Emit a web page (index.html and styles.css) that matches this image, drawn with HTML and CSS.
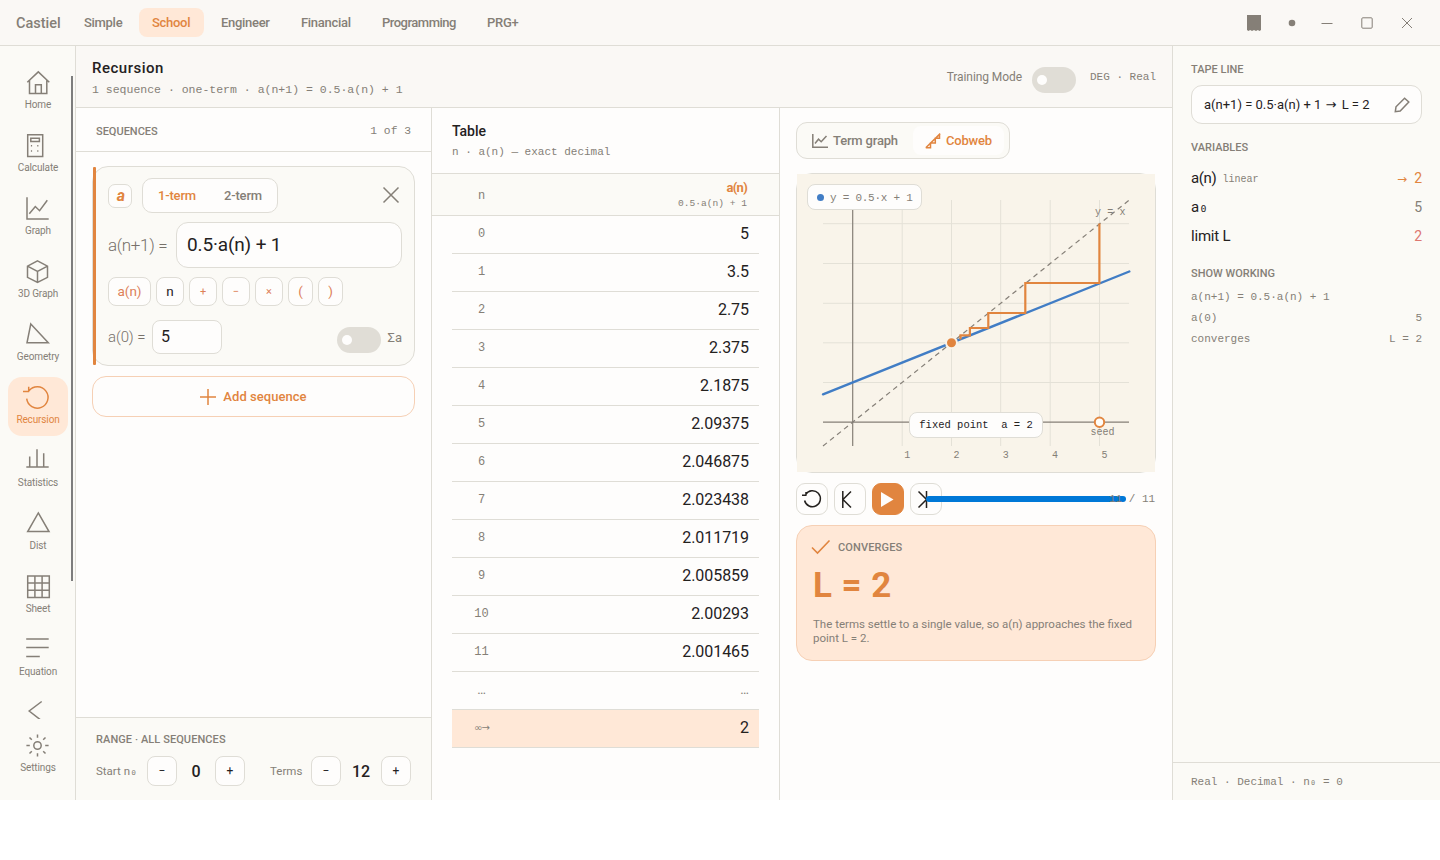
FILE: index.html
```html
<!DOCTYPE html>
<html lang="en">
<head>
<meta charset="utf-8">
<title>Castiel</title>
<link rel="stylesheet" href="styles.css">
</head>
<body>
<div class="app">
  <header class="titlebar">
    <div class="brand">Castiel</div>
    <nav class="modes">
      <span class="mode mode-simple">Simple</span>
      <span class="mode mode-school active">School</span>
      <span class="mode mode-engineer">Engineer</span>
      <span class="mode mode-financial">Financial</span>
      <span class="mode mode-programming">Programming</span>
      <span class="mode mode-prg">PRG+</span>
    </nav>
    <div class="window-tools">
      <svg width="14" height="16" viewBox="0 0 14 16"><path class="solid" d="M0 0H14V15l-1.400 1-1.800-1-1.800 1-2-1-2 1-1.800-1L1.400 16 0 15Z"/></svg>
      <svg width="8" height="8" viewBox="0 0 8 8"><circle class="solid" cx="4" cy="4" r="3.300"/></svg>
      <svg width="12" height="12" viewBox="0 0 12 12"><path class="hair" d="M.5 6.500h11"/></svg>
      <svg width="12" height="12" viewBox="0 0 12 12"><rect class="hair" x=".8" y=".8" width="10.400" height="10.400" rx="1"/></svg>
      <svg width="12" height="12" viewBox="0 0 12 12"><path class="hair" d="M1 1l10 10M11 1L1 11"/></svg>
    </div>
  </header>

  <div class="body">
    <aside class="sidebar">
      <div class="nav-list">
        <div class="nav-item"><svg class="ico" viewBox="0 0 24 24"><path d="M1.300 11.300L12.300.9l11 10.400M3.500 9.500V22.500H20.800V9.500M9.500 22V13.800H15.300V22"/></svg><span>Home</span></div>
        <div class="nav-item"><svg class="ico" viewBox="0 0 24 24"><path d="M1.700.8H16.700V22.500H1.700ZM4.800 4.300H13.400V7.500H4.800Z"/><path d="M4.900 11.700h1.200M11.200 11.700h1.200M4.900 17h1.200M11.200 17h1.200"/></svg><span>Calculate</span></div>
        <div class="nav-item"><svg class="ico" viewBox="0 0 24 24"><path d="M1 .3V22H22.700M3.300 16.700l6-7.200 4.300 4.200L21.300 3.300"/></svg><span>Graph</span></div>
        <div class="nav-item"><svg class="ico" viewBox="0 0 24 24"><path d="M11.500.8l10 5.400v11.100l-10 5-10-5V6.200ZM1.500 6.200l10 5.100 10-5.100M11.500 11.300v11"/></svg><span>3D Graph</span></div>
        <div class="nav-item"><svg class="ico" viewBox="0 0 24 24"><path d="M4.800.9L22.300 19.800H1Z"/></svg><span>Geometry</span></div>
        <div class="nav-item active"><svg class="ico" viewBox="0 0 24 24"><path d="M3 4.700A10.700 10.700 0 1 1 .7 12.700M-3 5.500H3.200M2.700.8V5.500"/></svg><span>Recursion</span></div>
        <div class="nav-item"><svg class="ico" viewBox="0 0 24 24"><path d="M.3 18H22.700M3.700 18V7.500M11 18V.3M17.700 18V4.200"/></svg><span>Statistics</span></div>
        <div class="nav-item"><svg class="ico" viewBox="0 0 24 24"><path d="M12.300.9L23 19.600H1.700Z"/></svg><span>Dist</span></div>
        <div class="nav-item"><svg class="ico" viewBox="0 0 24 24"><path d="M1.700.9H23.300V22.500H1.700ZM8.900.9V22.500M16.100.9V22.500M1.700 8.100H23.300M1.700 15.300H23.300"/></svg><span>Sheet</span></div>
        <div class="nav-item"><svg class="ico" viewBox="0 0 24 24"><path d="M.2 1H22.700M.2 9.600H22.700M.2 18.400H13.800"/></svg><span>Equation</span></div>
        <div class="nav-item"><svg class="ico" viewBox="0 0 24 24"><path d="M15.700.5L3.200 10 16 20"/></svg></div>
      </div>
      <div class="scroll-thumb"></div>
      <div class="nav-item settings"><svg class="ico" viewBox="0 0 24 24"><circle cx="11.500" cy="11.500" r="3.700"/><path d="M11.500.5v3.300M11.500 19.200v3.300M.4 11.500h3.400M19.200 11.500h3.400M3.500 3.500l2.300 2.300M17.200 17.200l2.300 2.300M19.500 3.500l-2.300 2.300M5.800 17.200l-2.300 2.300"/></svg><span>Settings</span></div>
    </aside>

    <main class="main">
      <div class="page-head">
        <div>
          <div class="page-title">Recursion</div>
          <div class="page-sub mono">1 sequence · one-term · a(n+1) = 0.5·a(n) + 1</div>
        </div>
        <div class="head-right">
          <span class="training">Training Mode</span>
          <span class="toggle"></span>
          <span class="angle mono">DEG · Real</span>
        </div>
      </div>

      <div class="columns">
        <section class="col-seq">
          <div class="seq-head"><span class="caps">SEQUENCES</span><span class="mono">1 of 3</span></div>
          <div class="seq-list">
            <div class="seq-card">
              <div class="card-top">
                <span class="seq-name">a</span>
                <div class="segment"><span class="active">1-term</span><span>2-term</span></div>
                <svg class="close" width="18" height="18" viewBox="0 0 18 18"><path d="M1.500 1.500l15 15M16.500 1.500l-15 15"/></svg>
              </div>
              <div class="formula"><span class="formula-label">a(n+1) =</span><div class="formula-input">0.5·a(n) + 1</div></div>
              <div class="chips">
                <span class="chip wide">a(n)</span><span class="chip dark">n</span><span class="chip sm">+</span><span class="chip sm">−</span><span class="chip sm">×</span><span class="chip paren">(</span><span class="chip paren">)</span>
              </div>
              <div class="initial">
                <span class="initial-label">a(0) =</span><div class="initial-input">5</div>
                <span class="toggle"></span><span class="sigma">Σa</span>
              </div>
            </div>
            <div class="add"><svg width="16" height="16" viewBox="0 0 16 16"><path d="M8 0v16M0 8h16"/></svg><span>Add sequence</span></div>
          </div>
          <div class="range">
            <div class="caps">RANGE · ALL SEQUENCES</div>
            <div class="steppers">
              <span class="step-label">Start n<i class="nought">₀</i></span><span class="step">−</span><b>0</b><span class="step">+</span>
              <span class="step-label terms">Terms</span><span class="step">−</span><b class="twelve">12</b><span class="step">+</span>
            </div>
          </div>
        </section>

        <section class="col-table">
          <div class="table-title">
            <div class="title">Table</div>
            <div class="mono sub">n · a(n) — exact decimal</div>
          </div>
          <div class="table-head">
            <span class="mono idx">n</span>
            <div class="series"><div class="series-name">a(n)</div><div class="mono series-rule">0.5·a(n) + 1</div></div>
          </div>
          <div class="rows">
            <div class="row"><span class="mono idx">0</span><span>5</span></div>
            <div class="row"><span class="mono idx">1</span><span>3.5</span></div>
            <div class="row"><span class="mono idx">2</span><span>2.75</span></div>
            <div class="row"><span class="mono idx">3</span><span>2.375</span></div>
            <div class="row"><span class="mono idx">4</span><span>2.1875</span></div>
            <div class="row"><span class="mono idx">5</span><span>2.09375</span></div>
            <div class="row"><span class="mono idx">6</span><span>2.046875</span></div>
            <div class="row"><span class="mono idx">7</span><span>2.023438</span></div>
            <div class="row"><span class="mono idx">8</span><span>2.011719</span></div>
            <div class="row"><span class="mono idx">9</span><span>2.005859</span></div>
            <div class="row"><span class="mono idx">10</span><span>2.00293</span></div>
            <div class="row"><span class="mono idx">11</span><span>2.001465</span></div>
            <div class="row dots"><span class="idx">…</span><span class="dots-end">…</span></div>
            <div class="row limit"><span class="idx inf">∞→</span><span>2</span></div>
          </div>
        </section>

        <section class="col-graph">
          <div class="tabs">
            <span class="tab"><svg width="16" height="14" viewBox="0 0 16 14"><path d="M.8 0V13.200H16M3 9.500l3.500-4.300 2.700 2.600L14.500 2"/></svg>Term graph</span>
            <span class="tab active"><svg width="16" height="16" viewBox="0 0 16 16"><path d="M.8 14.800L15.200.6M.8 14.800H5.500V10H10.300V5.200H14.500V2"/></svg>Cobweb</span>
          </div>
          <div class="plot">
            <svg class="plot-svg" width="358" height="298" viewBox="0 0 358 298">
              <rect class="plot-bg" width="358" height="298"/>
              <path class="grid" d="M105.200 26V272M154.500 26V272M203.700 26V272M253.200 26V272M302.500 26V272M26 208.500H332M26 168.800H332M26 129.300H332M26 89.500H332M26 49.700H332"/>
              <path class="axis" d="M55.700 26V272M26 248.200H332"/>
              <path class="diag" d="M26 272L332.300 26"/>
              <path class="line" d="M26 220.300L332.300 97.500"/>
              <path class="web" d="M302.400 49.500V109H228.300V139H191.300V154H172.900V161.400H163.500V165.500"/>
              <circle class="fixed-dot" cx="154.500" cy="168.800" r="5.500"/>
              <circle class="seed-dot" cx="302.500" cy="248.200" r="4.700"/>
              <text x="107.200" y="284">1</text><text x="156.500" y="284">2</text><text x="205.800" y="284">3</text><text x="255" y="284">4</text><text x="304.500" y="284">5</text>
              <text x="298" y="40.500" textLength="30.500">y = x</text>
              <text x="293.500" y="261" textLength="24">seed</text>
            </svg>
            <div class="plot-key mono"><i></i>y = 0.5·x + 1</div>
            <div class="plot-tip mono">fixed point&nbsp; a = 2</div>
          </div>
          <div class="player">
            <span class="pbtn"><svg viewBox="0 0 32 32"><path d="M9.700 11.300A8 8 0 1 1 8.600 17.500M6 12.300H10.500M10 9V12.300"/></svg></span>
            <span class="pbtn"><svg viewBox="0 0 32 32"><path d="M8.800 8V25M17 8.500L9 16.500l8 8"/></svg></span>
            <span class="pbtn play"><svg viewBox="0 0 32 32"><path d="M9 9l12.500 7.500L9 24Z"/></svg></span>
            <span class="pbtn"><svg viewBox="0 0 32 32"><path d="M16.500 8V25M8.500 8.500l8 8-8 8"/></svg></span>
            <span class="slider"></span>
            <span class="count mono">11 / 11</span>
          </div>
          <div class="result">
            <div class="result-head"><svg width="20" height="16" viewBox="0 0 20 16"><path d="M1 7.500l5.500 5.500L18.500.5"/></svg><span class="caps">CONVERGES</span></div>
            <div class="result-value">L = 2</div>
            <div class="result-text">The terms settle to a single value, so a(n) approaches the fixed<br>point L = 2.</div>
          </div>
        </section>
      </div>
    </main>

    <aside class="panel">
      <div class="panel-body">
        <div class="caps">TAPE LINE</div>
        <div class="tape"><span>a(n+1) = 0.5·a(n) + 1 <em>→</em> L = 2</span><svg width="16" height="16" viewBox="0 0 16 16"><path d="M1.300 14.700L2 9.800 10.600 1.200 14.800 5 6.200 14Z"/></svg></div>
        <div class="caps">VARIABLES</div>
        <div class="vars">
          <div class="var"><span>a(n)<small class="mono">linear</small></span><span class="val hot"><em>→</em>2</span></div>
          <div class="var"><span>a<i class="nought">₀</i></span><span class="val">5</span></div>
          <div class="var"><span>limit L</span><span class="val pink">2</span></div>
        </div>
        <div class="caps">SHOW WORKING</div>
        <div class="work mono">
          <div><span>a(n+1) = 0.5·a(n) + 1</span></div>
          <div><span>a(0)</span><span>5</span></div>
          <div><span>converges</span><span>L = 2</span></div>
        </div>
      </div>
      <div class="panel-foot mono">Real · Decimal · n<i class="nought">₀</i> = 0</div>
    </aside>
  </div>
</div>
</body>
</html>
```
FILE: styles.css
```css
:root {
  --ink: #24211e;
  --muted: #857f77;
  --line: #dfddd6;
  --accent: #e1853f;
  --tint: #ffe8d7;
  --soft: #fbfaf6;
  --paper: #fefdfc;
}
* { box-sizing: border-box; }
body { margin: 0; background: #fff; color: var(--ink); font-family: Roboto, "DejaVu Sans", sans-serif; }
svg { display: block; fill: none; overflow: visible; flex: none; }
em { font-style: normal; }
.mono { font-family: "Liberation Mono", "DejaVu Sans Mono", monospace; color: var(--muted); }
.nought { font-family: "DejaVu Sans Mono", monospace; font-style: normal; font-size: 1.050em; line-height: 1; }
.mono .nought { font-size: 1em; }
.caps { font-size: 11px; line-height: 14px; padding-top: 1px; margin-bottom: -1px; font-weight: 500; color: var(--muted); }
.app { height: 800px; display: flex; flex-direction: column; overflow: hidden; background: var(--paper); }

.titlebar { height: 46px; flex: none; display: flex; align-items: center; padding: 0 27px 0 16px; background: #faf8f5; border-bottom: 1px solid var(--line); color: var(--muted); }
.brand { font-size: 14.500px; font-weight: 500; width: 55px; padding-top: 1px; white-space: nowrap; }
.modes { display: flex; gap: 4px; }
.mode { height: 29px; line-height: 30px; padding: 0 13px; border-radius: 8px; font-size: 13px; font-weight: 500; white-space: nowrap; letter-spacing: -.3px; }
.mode-simple { width: 64px; }
.mode-school { width: 65px; }
.mode-engineer { width: 76px; }
.mode-financial { width: 77px; }
.mode-programming { width: 101px; letter-spacing: -.5px; }
.mode.active { background: var(--tint); color: var(--accent); }
.window-tools { margin-left: auto; display: flex; align-items: center; gap: 26px; }
.window-tools svg:nth-child(2) { margin-left: 1px; }
.window-tools svg:nth-child(3) { margin-left: -1px; }
.window-tools svg:nth-child(n+4) { margin-left: 2px; }
.solid { fill: var(--muted); }
.hair { stroke: var(--muted); stroke-width: 1; }

.body { flex: 1; min-height: 0; display: flex; }
.sidebar { position: relative; width: 76px; flex: none; display: flex; flex-direction: column; background: var(--soft); border-right: 1px solid var(--line); }
.nav-list { height: 673px; flex: none; overflow: hidden; padding: 16px 0 0 8px; display: flex; flex-direction: column; gap: 4px; }
.nav-item { width: 60px; height: 59px; flex: none; padding-top: 9px; display: flex; flex-direction: column; align-items: center; gap: 4px; border-radius: 14px; color: var(--muted); font-size: 10px; line-height: 12px; letter-spacing: -.13px; }
.nav-item.active { background: var(--tint); color: var(--accent); }
.nav-item.settings { margin: 6px 0 0 8px; }
.ico { width: 24px; height: 24px; stroke: currentColor; stroke-width: 1.500; }
.scroll-thumb { position: absolute; left: 71px; top: 30px; width: 2px; height: 505px; background: #7d7d7d; }

.main { width: 1097px; flex: none; display: flex; flex-direction: column; border-right: 1px solid var(--line); }
.page-head { height: 62px; flex: none; display: flex; justify-content: space-between; padding: 12px 16px 0; background: #faf8f5; border-bottom: 1px solid var(--line); }
.page-title { font-size: 15px; line-height: 20px; font-weight: 500; letter-spacing: .5px; }
.page-sub { font-size: 11.500px; line-height: 14px; margin-top: 5px; }
.head-right { display: flex; align-items: flex-start; font-size: 12px; color: var(--muted); line-height: 14px; }
.training { margin: 12px 10px 0 0; letter-spacing: -.08px; }
.toggle { width: 44px; height: 26px; border-radius: 13px; background: #e0ddd6; display: flex; align-items: center; padding-left: 5px; }
.toggle::after { content: ""; width: 10px; height: 10px; border-radius: 50%; background: var(--paper); }
.head-right .toggle { margin: 9px 14px 0 0; }
.angle { font-size: 11px; margin-top: 12px; }

.columns { flex: 1; min-height: 0; display: flex; }
.col-seq { width: 356px; flex: none; display: flex; flex-direction: column; border-right: 1px solid var(--line); }
.seq-head { height: 44px; flex: none; display: flex; justify-content: space-between; align-items: center; padding: 3px 20px 0; border-bottom: 1px solid var(--line); font-size: 11.300px; }
.seq-list { flex: 1; padding: 14px 16px; }
.seq-card { position: relative; height: 200px; padding: 11px 12px 0 15px; border: 1px solid var(--line); border-radius: 16px; background: var(--soft); }
.seq-card::before { content: ""; position: absolute; left: 0; top: 0; width: 3px; height: 198px; border-radius: 1px; background: var(--accent); }
.card-top { display: flex; align-items: center; height: 35px; }
.seq-name { width: 24px; height: 24px; margin-right: 10px; border: 1px solid var(--line); border-radius: 7px; background: var(--paper); color: var(--accent); font-size: 16px; font-weight: 700; font-style: italic; line-height: 22px; text-align: center; padding-left: 2px; }
.segment { width: 136px; height: 35px; display: flex; border: 1px solid var(--line); border-radius: 10px; background: var(--paper); color: var(--muted); font-size: 13px; font-weight: 500; line-height: 33px; padding-left: 1px; letter-spacing: -.2px; }
.segment span { width: 66px; text-align: center; }
.segment .active { color: var(--accent); }
.close { margin: -2px 2px 0 auto; stroke: var(--muted); stroke-width: 1.500; }
.formula { display: flex; align-items: center; height: 46px; margin-top: 9px; }
.formula-label { width: 68px; color: #77716a; font-size: 17px; white-space: nowrap; font-weight: 300; letter-spacing: -.35px; }
.formula-input { flex: 1; height: 46px; border: 1px solid var(--line); border-radius: 12px; background: var(--paper); font-size: 19px; line-height: 43px; padding-left: 10px; letter-spacing: -.15px; }
.chips { display: flex; gap: 5px; margin-top: 9px; }
.chip { width: 28px; height: 29px; border: 1px solid var(--line); border-radius: 8px; background: var(--paper); color: #dd8058; font-size: 13.500px; line-height: 27px; text-align: center; }
.chip.wide { width: 43px; }
.chip.dark { color: var(--ink); }
.chip.sm { font-size: 11px; }
.chip.paren { width: 25px; }
.initial { display: flex; align-items: center; margin-top: 14px; height: 34px; }
.initial-label { width: 44px; color: #77716a; font-size: 15px; font-weight: 300; letter-spacing: -.1px; }
.initial-input { width: 70px; height: 34px; border: 1px solid var(--line); border-radius: 8px; background: var(--paper); font-size: 16px; line-height: 32px; padding-left: 8px; }
.initial .toggle { margin: 6px 7px 0 auto; }
.sigma { color: var(--muted); font-size: 13px; }
.add { height: 41px; margin-top: 10px; display: flex; justify-content: center; align-items: center; gap: 7px; border: 1px solid #f6d0b5; border-radius: 14px; background: var(--paper); color: var(--accent); font-size: 13px; font-weight: 500; letter-spacing: .05px; }
.add svg { stroke: var(--accent); stroke-width: 1.500; }
.range { height: 83px; flex: none; background: var(--soft); border-top: 1px solid var(--line); padding: 14px 20px 0; }
.range .caps { letter-spacing: .08px; }
.steppers { display: flex; align-items: center; margin-top: 10px; height: 30px; }
.step-label { width: 51px; color: var(--muted); font-size: 11.500px; white-space: nowrap; }
.step-label.terms { width: 41px; margin-left: 25px; }
.step { width: 30px; height: 30px; flex: none; border: 1px solid var(--line); border-radius: 8px; background: var(--paper); text-align: center; font-size: 12px; line-height: 28px; }
.steppers b { width: 38px; text-align: center; font-size: 16px; font-weight: 500; }
.steppers .twelve { width: 40px; }

.col-table { width: 348px; flex: none; border-right: 1px solid var(--line); }
.table-title { height: 65px; padding: 14px 20px 0; }
.title { font-size: 14px; line-height: 18px; font-weight: 500; letter-spacing: -.05px; }
.sub { font-size: 11px; line-height: 14px; margin-top: 5px; }
.table-head { height: 43px; display: flex; justify-content: space-between; align-items: center; padding: 0 32px 0 20px; border: solid var(--line); border-width: 1px 0; background: var(--soft); }
.idx { width: 59px; text-align: center; color: var(--muted); }
.mono.idx { font-size: 12px; }
.table-head .mono.idx { padding-top: 2px; }
.idx.inf { font: 10px "DejaVu Sans", sans-serif; letter-spacing: -.8px; }
.series { text-align: right; }
.series-name { color: var(--accent); font-size: 13px; line-height: 15px; font-weight: 700; letter-spacing: -.7px; }
.series-rule { font-size: 9.600px; line-height: 13px; margin-top: 2px; }
.rows { padding: 0 20px; }
.row { height: 38px; display: flex; justify-content: space-between; align-items: center; padding: 0 10px 2px 0; border-bottom: 1px solid var(--line); font-size: 16px; letter-spacing: -.05px; }
.row.dots { color: var(--muted); font-size: 13px; }
.row.limit { background: var(--tint); }
.dots-end { letter-spacing: 0; }

.col-graph { flex: 1; padding: 14px 16px 0; }
.tabs { width: 214px; height: 37px; display: flex; padding: 3px; border: 1px solid var(--line); border-radius: 11px; background: var(--soft); color: var(--muted); font-size: 13px; font-weight: 500; letter-spacing: -.18px; }
.tab { height: 29px; display: flex; align-items: center; gap: 5px; padding: 0 12px; border-radius: 8px; white-space: nowrap; }
.tab svg { stroke: currentColor; stroke-width: 1.500; }
.tab.active { background: var(--paper); color: var(--accent); margin-left: 3px; }
.plot { position: relative; height: 300px; margin-top: 14px; border: 1px solid var(--line); border-radius: 16px; }
.plot-bg { fill: #f9f4ea; }
.grid { stroke: #e4e1d7; stroke-width: 1; }
.axis { stroke: var(--muted); stroke-width: 1.200; }
.diag { stroke: #857f77; stroke-width: 1.200; stroke-dasharray: 5 4; }
.line { stroke: #417dc5; stroke-width: 2.400; stroke-linecap: round; }
.web { stroke: var(--accent); stroke-width: 2.200; }
.fixed-dot { fill: var(--accent); stroke: #f9f4ea; stroke-width: 2; }
.seed-dot { fill: #fffdf9; stroke: var(--accent); stroke-width: 2; }
.plot-svg text { fill: var(--muted); font: 10px "Liberation Mono", monospace; }
.plot-key, .plot-tip { position: absolute; border: 1px solid var(--line); border-radius: 8px; background: var(--paper); white-space: nowrap; }
.plot-key { left: 10px; top: 10px; width: 115px; height: 26px; display: flex; align-items: center; padding-left: 9px; padding-top: 1px; font-size: 11px; letter-spacing: -.25px; }
.plot-key i { width: 7px; height: 7px; border-radius: 50%; background: #417dc5; margin-right: 6px; }
.plot-tip { left: 112px; top: 238px; width: 134px; height: 26px; line-height: 25px; text-align: center; color: var(--ink); font-size: 10.500px; }
.player { display: flex; gap: 6px; margin-top: 10px; align-items: center; }
.pbtn { width: 32px; height: 32px; flex: none; border: 1px solid var(--line); border-radius: 9px; background: var(--paper); }
.pbtn svg { width: 32px; height: 32px; margin: -1px; stroke: var(--ink); stroke-width: 1.500; }
.pbtn.play { background: var(--accent); border-color: var(--accent); }
.pbtn.play svg { fill: var(--paper); stroke: none; }
.slider { width: 200px; height: 6px; flex: none; margin: 0 -23px 0 -22px; border-radius: 3px; background: #0078d7; z-index: 1; }
.count { z-index: 2; font-size: 11px; white-space: nowrap; }
.result { height: 136px; margin-top: 10px; padding: 14px 16px; border: 1px solid #f6d0b5; border-radius: 16px; background: var(--tint); }
.result-head { display: flex; gap: 7px; align-items: center; height: 15px; margin-left: -2px; }
.result-head .caps { padding-top: 0; margin-bottom: 0; letter-spacing: .12px; }
.result-head svg { stroke: var(--accent); stroke-width: 1.600; }
.result-value { font-size: 35px; line-height: 40px; margin-top: 11px; font-weight: 700; letter-spacing: .45px; color: var(--accent); }
.result-text { font-size: 11.500px; line-height: 14px; margin-top: 11px; color: var(--muted); white-space: nowrap; }

.panel { flex: 1; display: flex; flex-direction: column; background: var(--soft); }
.panel-body { flex: 1; padding: 16px 18px 0; }
.tape { height: 39px; margin: 9px 0 16px; padding: 0 11px 0 12px; display: flex; justify-content: space-between; align-items: center; border: 1px solid var(--line); border-radius: 11px; background: var(--paper); font-size: 13px; }
.tape em { margin: 0 2px 0 1px; }
.tape svg { stroke: var(--muted); stroke-width: 1.500; }
.vars { margin: 10px 0 16px; }
.var { height: 28.700px; display: flex; justify-content: space-between; align-items: center; font-size: 15px; letter-spacing: -.35px; }
.var > span:last-child { letter-spacing: 0; }
.var small { font-size: 10px; margin-left: 6px; vertical-align: 1px; letter-spacing: 0; }
.var:last-child { letter-spacing: -.2px; }
.val { font-size: 14px; color: var(--muted); }
.hot { color: var(--accent); }
.hot em { font-size: 12px; margin-right: 7px; }
.pink { color: #dd7770; }
.work { font-size: 11px; margin-top: 7px; line-height: 21px; }
.work div { display: flex; justify-content: space-between; }
.panel-foot { height: 38px; border-top: 1px solid var(--line); padding-left: 18px; line-height: 38px; font-size: 11px; }
```
